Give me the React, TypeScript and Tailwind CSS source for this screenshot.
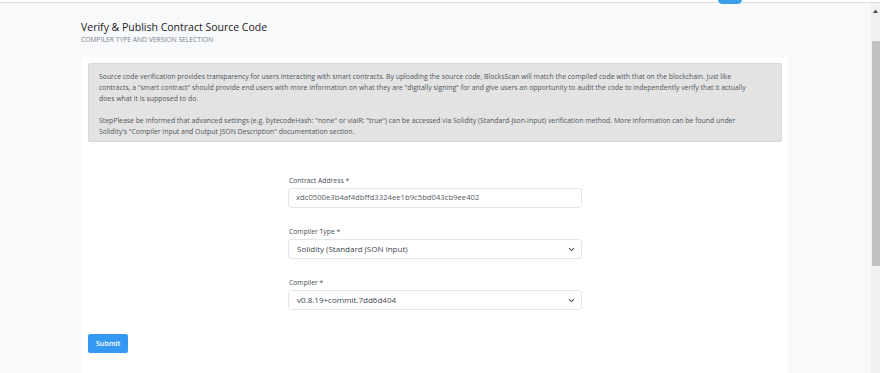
import React from "react";

function Chevron() {
  return (
    <svg width="7" height="5" viewBox="0 0 7 5" className="text-gray-600">
      <path d="M1 1.2 L3.5 3.6 L6 1.2" fill="none" stroke="currentColor" strokeWidth="1.1" />
    </svg>
  );
}

export default function App() {
  const font = { fontFamily: '"Open Sans", "Noto Sans", sans-serif' };
  return (
    <div className="relative w-[880px] h-[373px] overflow-hidden bg-[#f8f9fa]" style={font}>
      {/* top strip */}
      <div className="h-[2px] bg-white" />
      <div className="h-px bg-[#dcdcdc]" />
      <div className="absolute left-[718px] top-[-5px] w-[24px] h-[9px] rounded-full bg-[#3a9ee8]" />

      <div className="flex">
        <div className="flex-1">
          {/* heading */}
          <div className="pl-[81px] pt-[16px] h-[54px]">
            <div className="text-[10.5px] leading-[16px] text-[#1e2022]">Verify &amp; Publish Contract Source Code</div>
            <div className="text-[6.75px] leading-[10px] text-[#77838f] uppercase">Compiler Type and Version Selection</div>
          </div>
          {/* card */}
          <div className="ml-[82px] w-[706px] bg-white rounded-[4px] p-[6px] h-[340px]">
            <div className="bg-[#e3e3e3] border border-[#d8d8d8] rounded-[2px] px-[10px] pt-[7px] h-[79px] text-[6.87px] leading-[11px] text-[#4f555b] whitespace-nowrap">
              <p>
                Source code verification provides transparency for users interacting with smart contracts. By uploading the source code, BlocksScan will match the compiled code with that on the blockchain. Just like
                <br />
                contracts, a "smart contract" should provide end users with more information on what they are "digitally signing" for and give users an opportunity to audit the code to independently verify that it actually
                <br />
                does what it is supposed to do.
              </p>
              <p className="mt-[11px]">
                StepPlease be informed that advanced settings (e.g. bytecodeHash: "none" or viaIR: "true") can be accessed via Solidity (Standard-Json-Input) verification method. More information can be found under
                <br />
                Solidity's "Compiler Input and Output JSON Description" documentation section.
              </p>
            </div>

            <div className="w-[294px] mx-auto pt-[33px] flex flex-col">
              <label className="text-[6.8px] leading-[11px] text-[#4a4f55] pl-px">Contract Address *</label>
              <div className="mt-[2px] h-[20px] border border-[#e3e6ea] rounded-[3px] flex items-center pl-[7px] text-[7.7px] text-[#555b61]">
                xdc0500e3b4af4dbffd3324ee1b9c5bd043cb9ee402
              </div>

              <label className="mt-[18px] text-[6.8px] leading-[11px] text-[#4a4f55] pl-px">Compiler Type *</label>
              <div className="mt-[2px] h-[20px] border border-[#e3e6ea] rounded-[3px] flex items-center justify-between pl-[8px] pr-[6px] text-[8px] text-[#40464c]">
                <span>Solidity (Standard JSON Input)</span>
                <Chevron />
              </div>

              <label className="mt-[18px] text-[6.8px] leading-[11px] text-[#4a4f55] pl-px">Compiler *</label>
              <div className="mt-[2px] h-[20px] border border-[#e3e6ea] rounded-[3px] flex items-center justify-between pl-[8px] pr-[6px] text-[8px] text-[#40464c]">
                <span>v0.8.19+commit.7dd6d404</span>
                <Chevron />
              </div>
            </div>

            <div className="pt-[24px]">
              <button className="w-[40px] h-[19px] rounded-[2px] bg-[#3599f4] text-white text-[7.2px] font-semibold flex items-center justify-center">
                Submit
              </button>
            </div>
          </div>
        </div>
        {/* scrollbar */}
        <div className="w-[9px] h-[370px] bg-[#f1f1f1] flex flex-col items-center">
          <svg width="5" height="4" viewBox="0 0 5 4" className="mt-[6px]">
            <path d="M0 4 L2.5 0.5 L5 4 Z" fill="#505050" />
          </svg>
          <div className="mt-[28px] w-[8px] h-[225px] bg-[#c1c1c1]" />
        </div>
      </div>
    </div>
  );
}
